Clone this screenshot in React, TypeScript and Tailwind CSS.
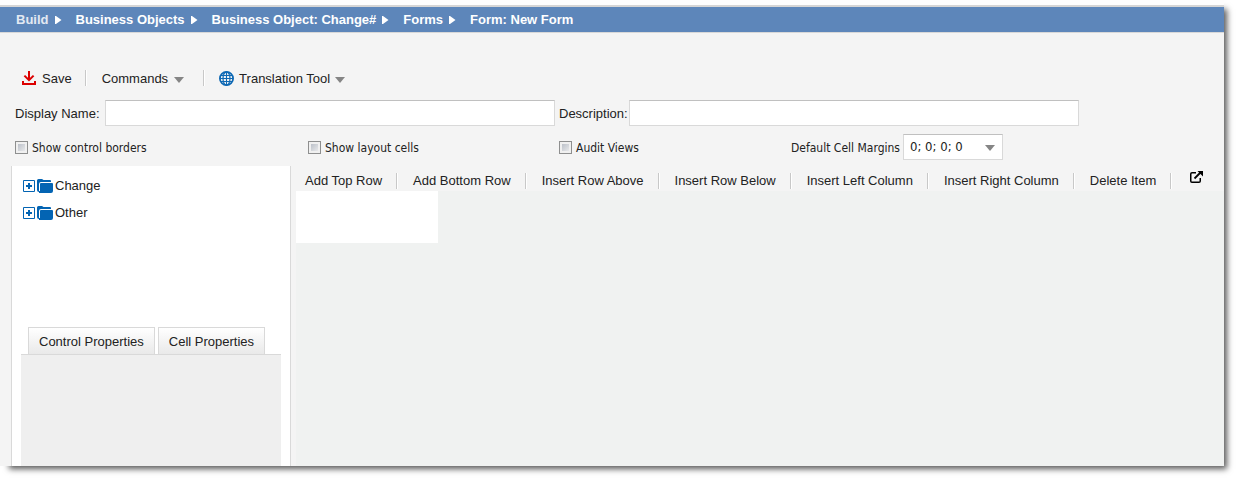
const crumbs = ["Build", "Business Objects", "Business Object: Change#", "Forms", "Form: New Form"];

const actions = [
  "Add Top Row",
  "Add Bottom Row",
  "Insert Row Above",
  "Insert Row Below",
  "Insert Left Column",
  "Insert Right Column",
  "Delete Item",
];

function DownArrow({ className = "" }: { className?: string }) {
  return (
    <svg className={className} width="10" height="6" viewBox="0 0 10 6" aria-hidden="true">
      <path d="M0 0h10L5 6z" fill="#858585" />
    </svg>
  );
}

function SaveIcon() {
  return (
    <svg width="14" height="14" viewBox="0 0 14 14" fill="none" stroke="#dc0000" strokeWidth="2" aria-hidden="true">
      <path d="M7 0v9M2.4 4.600L7 9.200 11.600 4.600" />
      <path d="M1 10v3h12v-3" />
    </svg>
  );
}

function GlobeIcon() {
  return (
    <svg width="15" height="15" viewBox="0 0 15 15" fill="none" stroke="#0f69b4" aria-hidden="true">
      <circle cx="7.5" cy="7.5" r="6.6" strokeWidth="1.8" />
      <ellipse cx="7.5" cy="7.5" rx="3.5" ry="6.7" strokeWidth="1.2" />
      <path d="M7.5 1v13M1 7.5h13M2 4.5h11M2 10.5h11" strokeWidth="1.1" />
    </svg>
  );
}

function ExpandIcon() {
  return (
    <svg width="12" height="12" viewBox="0 0 12 12" aria-hidden="true">
      <path d="M.5.5h11v11H.5z" fill="#fff" stroke="#0364b3" />
      <path d="M3 6h6M6 3v6" stroke="#0364b3" strokeWidth="2" />
    </svg>
  );
}

function FolderIcon() {
  return (
    <svg width="16" height="14" viewBox="0 0 16 14" aria-hidden="true">
      <path d="M0 1.5Q0 0 1.5 0H5l1.500 1H13q1 0 1 1v1H4Q2 3 2 5v8Q0 13 0 11z" fill="#0364b3" />
      <path d="M3 5q0-1 1-1h11q1 0 1 1v7q0 2-2 2H2V12h1z" fill="#0364b3" />
    </svg>
  );
}

function ExternalIcon() {
  return (
    <svg width="13" height="12" viewBox="0 0 13 12" fill="none" stroke="#000" aria-hidden="true">
      <path d="M6 1.750H2Q.75 1.750.75 3v7Q.75 11.250 2 11.250h7q1.250 0 1.250-1.250V7" strokeWidth="1.5" />
      <path d="M4.500 7.500l6-6" strokeWidth="1.8" />
      <path d="M7.500 0H13v5.500z" fill="#000" stroke="none" />
    </svg>
  );
}

function Separator() {
  return <span className="h-4 w-0.5 shrink-0 border-l border-[#c8c8c8] bg-white" />;
}

function Check({ label }: { label: string }) {
  return (
    <label className="flex items-center gap-1">
      <input
        type="checkbox"
        className="size-[13px] shrink-0 appearance-none border border-[#8e8f8f] bg-linear-to-br from-[#b0b6c0] to-[#f4f4f4] shadow-[inset_0_0_0_2px_#f0f0f0] checked:bg-[#0364b3]"
      />
      <span className="pt-0.5">{label}</span>
    </label>
  );
}

function TreeItem({ label }: { label: string }) {
  return (
    <li>
      <button type="button" className="flex h-[27px] items-center">
        <ExpandIcon />
        <span className="mx-0.5">
          <FolderIcon />
        </span>
        {label}
      </button>
    </li>
  );
}

export default function App() {
  return (
    <div className="flex min-h-screen flex-col bg-white pr-[15px] pb-[15px] font-['Liberation_Sans',Arial,sans-serif] text-[13px] leading-4 text-[#222]">
      <div className="flex grow flex-col bg-[#f4f4f4] shadow-[6px_6px_6px_-3px_rgba(0,0,0,0.65)]">
        <nav className="border-t-5 border-[#fdfdfd]">
          <ol className="flex h-7 items-center border-t-2 border-b border-t-[#d5d5d5] border-b-[#d8d8d8] bg-[#5d86ba] pl-4 font-bold text-white">
            {crumbs.map((crumb, i) => (
              <li key={crumb} className="flex items-center">
                <a href="#" className={i === 0 ? "text-[#e3e9f2]" : ""}>
                  {crumb}
                </a>
                {i < crumbs.length - 1 && (
                  <svg className="mr-3.5 ml-1.5" width="7" height="8" viewBox="0 0 7 8" aria-hidden="true">
                    <path d="M0 0h1l5.500 4L1 8H0z" fill="#fff" />
                  </svg>
                )}
              </li>
            ))}
          </ol>
        </nav>

        <div className="flex items-center pt-9 pl-[22px]">
          <button type="button" className="flex items-center gap-1.5 pr-[13px]">
            <SaveIcon />
            <span className="pt-0.5">Save</span>
          </button>
          <Separator />
          <button type="button" className="flex items-center gap-1.5 pr-[19px] pl-[15px]">
            <span className="pt-0.5">Commands</span>
            <DownArrow className="mt-1" />
          </button>
          <Separator />
          <button type="button" className="flex items-center gap-[5px] pl-3.5">
            <GlobeIcon />
            <span className="pt-0.5">Translation Tool</span>
            <DownArrow className="mt-1" />
          </button>
        </div>

        <div className="flex items-center pt-[13px] pl-[15px]">
          <label htmlFor="display-name" className="w-[90px] shrink-0 pt-0.5">
            Display Name:
          </label>
          <input
            id="display-name"
            type="text"
            className="h-[26px] w-[450px] border border-[#d9d9d9] border-t-[#c0c0c0] bg-white px-1.5 outline-none"
          />
          <label htmlFor="description" className="w-[74px] shrink-0 pt-0.5 pl-1 whitespace-nowrap">
            Description:
          </label>
          <input
            id="description"
            type="text"
            className="h-[26px] w-[450px] border border-[#d9d9d9] border-t-[#c0c0c0] bg-white px-1.5 outline-none"
          />
        </div>

        <div className="grid grid-cols-[293px_251px_232px_1fr] items-center pt-2 pl-[15px] font-['DejaVu_Sans_Condensed','DejaVu_Sans',sans-serif] text-[12px]">
          <Check label="Show control borders" />
          <Check label="Show layout cells" />
          <Check label="Audit Views" />
          <div className="flex items-center">
            <label htmlFor="margins" className="w-28 pt-0.5 whitespace-nowrap">
              Default Cell Margins
            </label>
            <span className="grid items-center">
              <select
                id="margins"
                className="col-start-1 row-start-1 h-[26px] w-[100px] appearance-none border border-[#d9d9d9] border-t-[#c0c0c0] bg-white px-1.5 text-[13px]"
              >
                <option>0; 0; 0; 0</option>
              </select>
              <DownArrow className="pointer-events-none col-start-1 row-start-1 mt-0.5 mr-2 justify-self-end" />
            </span>
          </div>
        </div>

        <div className="flex grow pt-1.5 pl-[11px]">
          <aside className="flex w-[280px] shrink-0 flex-col border-x border-[#d9d9d9] bg-white">
            <ul className="h-[161px] pt-1.5 pl-[11px]">
              <TreeItem label="Change" />
              <TreeItem label="Other" />
            </ul>
            <div className="flex grow flex-col px-[9px]">
              <div role="tablist" className="flex gap-[3px] border-b border-[#d9d9d9] pl-[7px]">
                {["Control Properties", "Cell Properties"].map((tab) => (
                  <button
                    key={tab}
                    type="button"
                    role="tab"
                    className="h-[27px] border border-b-0 border-[#d9d9d9] bg-linear-to-b from-white to-[#e9e9e9] px-2.5 pt-0.5"
                  >
                    {tab}
                  </button>
                ))}
              </div>
              <div role="tabpanel" className="grow bg-[#efefef]" />
            </div>
          </aside>

          <main className="ml-[5px] flex grow flex-col">
            <div className="flex h-[25px] items-center pt-1">
              {actions.map((action, i) => (
                <div key={action} className="flex items-center">
                  <button type="button" className={i === 0 ? "pr-3.5 pl-[9px]" : "pr-3.5 pl-[15px]"}>
                    {action}
                  </button>
                  <Separator />
                </div>
              ))}
              <button type="button" aria-label="Open in new window" className="mb-2 ml-[18px]">
                <ExternalIcon />
              </button>
            </div>
            <div className="grow bg-[#f0f2f1]">
              <div className="h-[52px] w-[142px] bg-white" />
            </div>
          </main>
        </div>
      </div>
    </div>
  );
}
